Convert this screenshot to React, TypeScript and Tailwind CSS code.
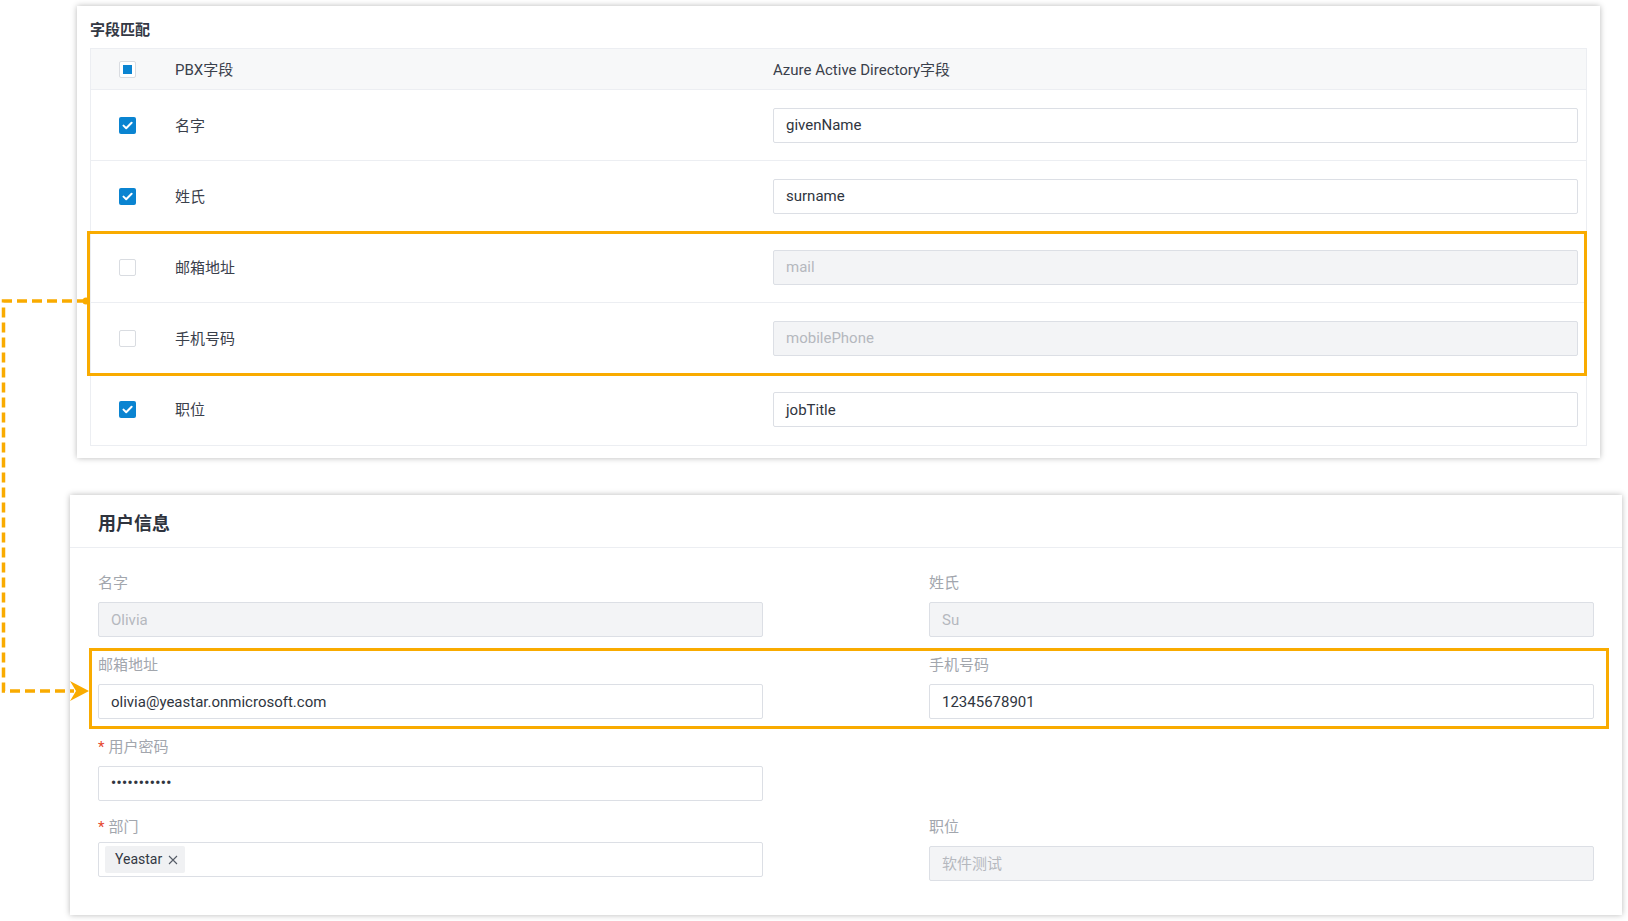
import React from "react";

type Row = { label: string; field: string; checked: boolean };

const rows: Row[] = [
  { label: "名字", field: "givenName", checked: true },
  { label: "姓氏", field: "surname", checked: true },
  { label: "邮箱地址", field: "mail", checked: false },
  { label: "手机号码", field: "mobilePhone", checked: false },
  { label: "职位", field: "jobTitle", checked: true },
];

const font = { fontFamily: 'Roboto, "Noto Sans CJK SC", sans-serif' };

function Checkbox({ state }: { state: "on" | "off" | "some" }) {
  if (state === "on") {
    return (
      <span className="flex h-[17px] w-[17px] items-center justify-center rounded-[2px] bg-[#0a84d1]">
        <svg width="11" height="9" viewBox="0 0 11 9" fill="none">
          <path d="M1.5 4.6 4.2 7.2 9.6 1.8" stroke="white" strokeWidth="2" strokeLinecap="round" strokeLinejoin="round" />
        </svg>
      </span>
    );
  }
  return (
    <span className="flex h-[17px] w-[17px] items-center justify-center rounded-[2px] border border-[#d9dce1] bg-white">
      {state === "some" && <span className="h-[9px] w-[9px] bg-[#0a84d1]" />}
    </span>
  );
}

function FieldInput({ value, disabled }: { value: string; disabled?: boolean }) {
  return (
    <div
      className={`flex h-[35px] items-center rounded-[2px] border border-[#dcdfe5] pl-[12px] pt-[1px] text-[15px] ${
        disabled ? "bg-[#f3f4f6] text-[#b5b8be]" : "bg-white text-[#2f3540]"
      }`}
    >
      {value}
    </div>
  );
}

function FormField({
  label,
  value,
  disabled,
  required,
}: {
  label: string;
  value: React.ReactNode;
  disabled?: boolean;
  required?: boolean;
}) {
  return (
    <div className="flex flex-col">
      <div className="flex h-[20px] items-center text-[15px] text-[#a2a6ad]">
        {required && <span className="mr-[4px] text-[#e5452d]">*</span>}
        {label}
      </div>
      <div className="mt-[9px]">
        {typeof value === "string" ? <FieldInput value={value} disabled={disabled} /> : value}
      </div>
    </div>
  );
}

export default function App() {
  return (
    <div className="relative h-[921px] w-[1628px] overflow-hidden bg-white pt-[6px]" style={font}>
      {/* ═══════════ FIELD MAPPING CARD ═══════════ */}
      <div className="relative ml-[77px] h-[452px] w-[1523px] bg-white px-[13px] shadow-[0_0_6px_rgba(0,0,0,0.28)]">
        <div className="pb-[9px] pt-[15px] text-[15px] font-bold leading-[18px] text-[#333844]">字段匹配</div>
        <div className="border border-[#eceef2]">
          <div className="flex h-[41px] items-center border-b border-[#eceef2] bg-[#f7f8f9] pt-[2px] text-[15px] text-[#3a404b]">
            <div className="-mt-[2px] w-[84px] pl-[28px]">
              <Checkbox state="some" />
            </div>
            <div className="w-[598px]">PBX字段</div>
            <div className="flex-1">Azure Active Directory字段</div>
          </div>
          {rows.map((r, i) => (
            <div
              key={r.label}
              className={`flex h-[71px] items-center text-[15px] text-[#3a404b] ${i < rows.length - 1 ? "border-b border-[#eceef2]" : ""}`}
            >
              <div className="w-[84px] pl-[28px]">
                <Checkbox state={r.checked ? "on" : "off"} />
              </div>
              <div className="w-[598px] pt-[2px]">{r.label}</div>
              <div className="flex-1 pr-[8px]">
                <FieldInput value={r.field} disabled={!r.checked} />
              </div>
            </div>
          ))}
        </div>
        {/* highlight */}
        <div className="absolute left-[10px] top-[225px] h-[145px] w-[1500px] border-[3px] border-[#f9ab00]" />
      </div>

      {/* ═══════════ USER INFO CARD ═══════════ */}
      <div className="relative ml-[70px] mt-[37px] h-[420px] w-[1552px] bg-white shadow-[0_0_6px_rgba(0,0,0,0.28)]">
        <div className="flex h-[53px] items-center border-b border-[#eceef2] pl-[28px] pt-[5px] text-[18px] font-bold text-[#2e333d]">
          用户信息
        </div>
        <div className="grid grid-cols-2 gap-x-[166px] gap-y-[18px] px-[28px] pt-[25px]">
          <FormField label="名字" value="Olivia" disabled />
          <FormField label="姓氏" value="Su" disabled />
          <FormField label="邮箱地址" value="olivia@yeastar.onmicrosoft.com" />
          <FormField label="手机号码" value="12345678901" />
          <FormField
            label="用户密码"
            required
            value={
              <div className="flex h-[35px] items-center rounded-[2px] border border-[#dcdfe5] bg-white pl-[12px] text-[14px] font-bold tracking-[0.5px] text-[#2f3540]">
                •••••••••••
              </div>
            }
          />
          <div />
          <div className="-mt-[2px]">
            <FormField
              label="部门"
              required
              value={
                <div className="-mt-[4px] flex h-[35px] items-center rounded-[2px] border border-[#dcdfe5] bg-white pl-[6px]">
                  <span className="flex h-[27px] items-center gap-[6px] rounded-[2px] bg-[#f0f1f3] pl-[10px] pr-[7px] text-[14px] text-[#333844]">
                    Yeastar
                    <svg width="10" height="10" viewBox="0 0 10 10">
                      <path d="M1 1l8 8M9 1 1 9" stroke="#555b66" strokeWidth="1.1" />
                    </svg>
                  </span>
                </div>
              }
            />
          </div>
          <div className="-mt-[2px]">
            <FormField label="职位" value="软件测试" disabled />
          </div>
        </div>
        {/* highlight */}
        <div className="absolute left-[19px] top-[153px] h-[81px] w-[1520px] border-[3px] border-[#f9ab00]" />
      </div>

      {/* connector */}
      <svg className="pointer-events-none absolute left-0 top-0" width="1628" height="921" viewBox="0 0 1628 921">
        <path d="M87 301 H3.5 V691 H74" fill="none" stroke="#f9ab00" strokeWidth="3.5" strokeDasharray="10 5" />
        <circle cx="86" cy="301" r="3.5" fill="#f9ab00" />
        <path d="M89 691 L70 681 L76 691 L70 701 Z" fill="#f9ab00" />
      </svg>
    </div>
  );
}
